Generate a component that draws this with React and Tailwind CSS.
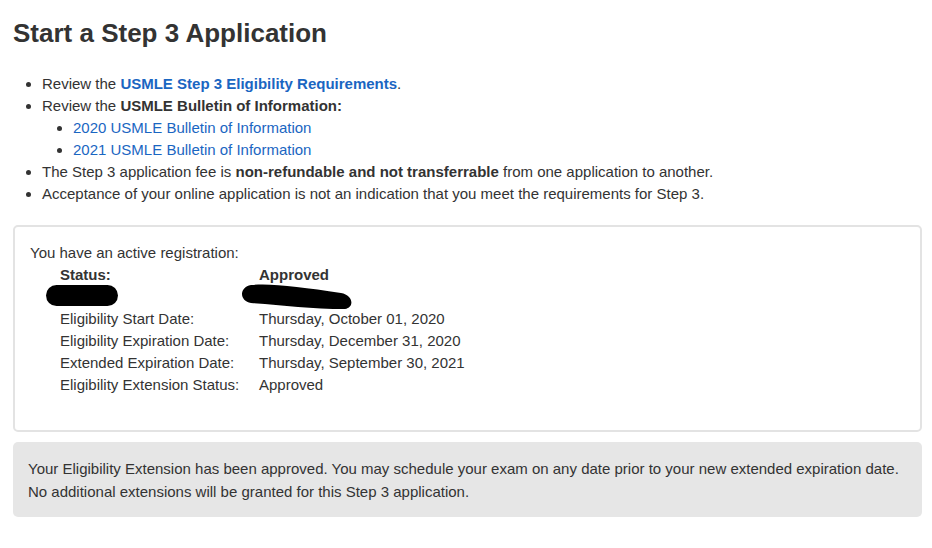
const rows = [
  ["Eligibility Start Date:", "Thursday, October 01, 2020"],
  ["Eligibility Expiration Date:", "Thursday, December 31, 2020"],
  ["Extended Expiration Date:", "Thursday, September 30, 2021"],
  ["Eligibility Extension Status:", "Approved"],
];

function Redaction({ w, h, className }) {
  return (
    <svg width={w} height={h} viewBox={`0 0 ${w} ${h}`} className={className}>
      <rect x="0" y="0" width={w} height={h} rx={h / 2} fill="#000" />
    </svg>
  );
}

export default function App() {
  return (
    <div className="bg-white min-h-[548px] pl-[13px] pr-[10px] pt-[17px] text-[#333] text-[15px] leading-[22px]" style={{ fontFamily: '"Liberation Sans", Arial, sans-serif' }}>
      <h1 className="text-[26px] leading-[32px] font-bold text-[#333]">Start a Step 3 Application</h1>

      <ul className="mt-[24px] pl-[29px] list-disc">
        <li>Review the <a className="text-[#1a66c2] font-bold">USMLE Step 3 Eligibility Requirements</a>.</li>
        <li>
          Review the <b>USMLE Bulletin of Information:</b>
          <ul className="pl-[31px] list-disc">
            <li><a className="text-[#1a66c2]">2020 USMLE Bulletin of Information</a></li>
            <li><a className="text-[#1a66c2]">2021 USMLE Bulletin of Information</a></li>
          </ul>
        </li>
        <li>The Step 3 application fee is <b>non-refundable and not transferrable</b> from one application to another.</li>
        <li>Acceptance of your online application is not an indication that you meet the requirements for Step 3.</li>
      </ul>

      <div className="mt-[20px] border-2 border-[#e3e3e3] rounded-[5px] h-[207px] pl-[15px] pt-[15px]">
        <div>You have an active registration:</div>
        <div className="pl-[30px] grid grid-cols-[199px_1fr]">
          <div className="font-bold">Status:</div>
          <div className="font-bold">Approved</div>
          <div className="h-[22px] relative">
            <Redaction w={72} h={21} className="absolute left-[-14px] top-[-1px]" />
          </div>
          <div className="h-[22px] relative">
            <svg width="114" height="30" viewBox="0 0 114 30" className="absolute left-[-18px] top-[-5px]">
              <path d="M10 4 C30 2 60 6 100 12 C112 14 114 26 104 28 C70 28 40 24 10 22 C-2 20 -2 6 10 4 Z" fill="#000" />
            </svg>
          </div>
          {rows.map(([k, v]) => (
            <div key={k} className="contents">
              <div>{k}</div>
              <div>{v}</div>
            </div>
          ))}
        </div>
      </div>

      <div className="mt-[10px] bg-[#e6e6e6] rounded-[5px] h-[75px] px-[15px] pt-[15px] leading-[23px]">
        <div>Your Eligibility Extension has been approved. You may schedule your exam on any date prior to your new extended expiration date.</div>
        <div>No additional extensions will be granted for this Step 3 application.</div>
      </div>
    </div>
  );
}
